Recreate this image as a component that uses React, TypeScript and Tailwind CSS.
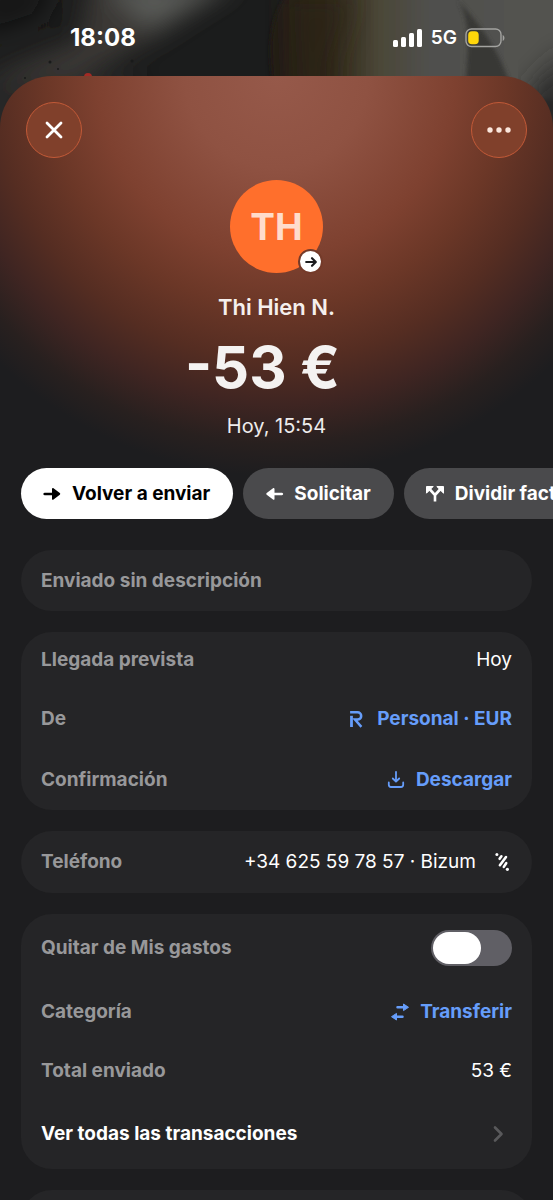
import type { ReactNode } from 'react';

const ArrowRight = () => (
  <svg viewBox="0 0 20 20" className="size-5 shrink-0" fill="currentColor" aria-hidden="true">
    <path d="M2.500 8.700h7.500V5c0-.9.9-1.200 1.500-.7l6.300 4.800c.6.500.6 1.200 0 1.700L11.500 15.600c-.6.500-1.500.2-1.500-.7v-3.700H2.500c-1.600 0-1.600-2.500 0-2.500Z" />
  </svg>
);

const ArrowLeft = () => (
  <svg viewBox="0 0 20 20" className="size-5 shrink-0" fill="currentColor" aria-hidden="true">
    <path d="M18 8.700h-7.500V5c0-.9-.9-1.200-1.500-.7L2.700 9.100c-.6.500-.6 1.200 0 1.700L9 15.600c.6.500 1.500.2 1.500-.7v-3.700H18c1.600 0 1.600-2.500 0-2.500Z" />
  </svg>
);

const SplitIcon = () => (
  <svg viewBox="0 0 20 20" className="size-5 shrink-0" aria-hidden="true">
    <path d="M4.500 5l5.500 6v6.500M15.500 5L10 11" fill="none" stroke="currentColor" strokeWidth="2.600" />
    <path d="M1.500 2.500h6.700L1.500 9.200zM18.500 2.500h-6.700l6.700 6.700z" fill="currentColor" stroke="currentColor" strokeWidth="1" strokeLinejoin="round" />
  </svg>
);

const BankIcon = () => (
  <svg viewBox="0 0 20 20" className="size-5 shrink-0" fill="none" aria-hidden="true">
    <path d="M4.500 6.800V18" stroke="currentColor" strokeWidth="2.800" />
    <path d="M3.100 3.200h7.400a3.700 3.700 0 0 1 0 7.400H8l6.400 7.200" stroke="currentColor" strokeWidth="2.500" />
  </svg>
);

const DownloadIcon = () => (
  <svg viewBox="0 0 20 20" className="size-5 shrink-0" fill="none" stroke="currentColor" strokeWidth="1.800" strokeLinecap="round" strokeLinejoin="round" aria-hidden="true">
    <path d="M10 1.800v9.700M6.800 8.500l3.200 3.200 3.200-3.200M2.800 12.500v2.300c0 1.500.8 2.200 2.200 2.200h10c1.400 0 2.200-.7 2.200-2.200v-2.300" />
  </svg>
);

const BizumIcon = () => (
  <svg viewBox="0 0 20 20" className="size-5 shrink-0" fill="none" stroke="currentColor" strokeLinecap="round" strokeWidth="2.600" aria-hidden="true">
    <path d="M9.400 4.300L7.600 6.800M14 5L7.900 13.200M14.200 11.200l-2.400 3.700" />
    <circle cx="4.900" cy="2.400" r="1.500" fill="currentColor" stroke="none" />
    <circle cx="15.400" cy="17.300" r="1.600" fill="currentColor" stroke="none" />
  </svg>
);

const TransferIcon = () => (
  <svg viewBox="0 0 20 20" className="size-5 shrink-0" aria-hidden="true">
    <path d="M7.500 5.300h7M12.500 14.700h-7" stroke="currentColor" strokeWidth="2.500" strokeLinecap="round" />
    <path d="M13.500 2l5 3.300-5 3.300zM6.500 11.400l-5 3.300 5 3.300z" fill="currentColor" stroke="currentColor" strokeWidth="1" strokeLinejoin="round" />
  </svg>
);

function StatusBar() {
  return (
    <header className="relative flex h-[76px] shrink-0 items-center justify-between pl-[70px] pr-12 text-white">
      <span className="text-[24px] font-bold leading-7">18:08</span>
      <div className="flex items-center gap-2">
        <svg viewBox="0 0 30 18" className="h-[18px] w-[30px]" fill="currentColor" role="img" aria-label="Cobertura">
          <rect x="0" y="11" width="5" height="7" rx="1.500" />
          <rect x="8" y="8" width="5" height="10" rx="1.500" />
          <rect x="16" y="4" width="5" height="14" rx="1.500" />
          <rect x="24" y="0" width="5" height="18" rx="1.500" />
        </svg>
        <span className="text-[19px] font-semibold leading-6">5G</span>
        <svg viewBox="0 0 40 20" className="h-5 w-10" role="img" aria-label="Batería">
          <rect x="1" y="1" width="35" height="17.500" rx="5.500" fill="none" stroke="#a3a3a0" strokeWidth="1.400" />
          <rect x="3.200" y="3.300" width="10.500" height="13" rx="3.800" fill="#ffd60a" />
          <path d="M37.700 7v6c2.300-1 2.300-5 0-6Z" fill="#a3a3a0" />
        </svg>
      </div>
    </header>
  );
}

// Dimmed, out-of-focus photo that shows above the sheet
function Backdrop() {
  return (
    <svg
      viewBox="0 0 553 140"
      preserveAspectRatio="none"
      className="absolute inset-x-0 top-0 h-[140px] w-full"
      aria-hidden="true"
    >
      <defs>
        <filter id="soft" x="-30%" y="-60%" width="160%" height="220%">
          <feGaussianBlur stdDeviation="13" />
        </filter>
        <filter id="edge" x="-30%" y="-30%" width="160%" height="160%">
          <feGaussianBlur stdDeviation="2" />
        </filter>
        <linearGradient id="petal" x1="0" x2="1">
          <stop offset="0" stopColor="#211b13" />
          <stop offset=".2" stopColor="#30291a" />
          <stop offset=".38" stopColor="#4b4738" />
          <stop offset=".55" stopColor="#50504d" />
          <stop offset="1" stopColor="#535351" />
        </linearGradient>
      </defs>
      <rect width="553" height="140" fill="#1b1c1c" />
      <g filter="url(#soft)">
        <path d="M-20 80L80 40 90-20H240L150 40 60 90-20 140Z" fill="#3a3936" />
        <path d="M100-20H235L150 28Z" fill="#5a5b59" />
        <path d="M-20-20H60L40 20-20 40Z" fill="#141515" />
        <path d="M-20 80H140V160H-20Z" fill="#262726" />
      </g>
      <path d="M286-5C266 25 268 60 276 100H560V-5Z" fill="url(#petal)" filter="url(#edge)" />
      <path d="M285-5H350C355 30 320 62 340 100H290Z" fill="#2b2417" opacity=".6" filter="url(#soft)" />
      <path d="M458 0C472 25 468 50 465 90H512C500 50 480 25 458 0Z" fill="#393836" filter="url(#edge)" />
      <path d="M530 90L570 50V140H530Z" fill="#2c2c2b" filter="url(#soft)" />
      <circle cx="88" cy="77" r="4" fill="#a32a25" />
      <g fill="#191a1a">
        <circle cx="50" cy="62" r="1.500" />
        <circle cx="132" cy="61" r="1.500" />
        <circle cx="58" cy="69" r="1" />
        <circle cx="25" cy="78" r="1" />
      </g>
    </svg>
  );
}

function RoundButton({ label, children }: { label: string; children: ReactNode }) {
  return (
    <button
      type="button"
      aria-label={label}
      className="flex size-14 items-center justify-center rounded-full border border-[#c25a38] bg-[#80402b]"
    >
      {children}
    </button>
  );
}

const PILL = 'flex h-[51px] shrink-0 items-center gap-[10px] rounded-full pl-[21px] pr-[23px] text-[19px] font-bold leading-6';

function Card({ children }: { children: ReactNode }) {
  return <section className="shrink-0 rounded-[31px] bg-[#252527] px-5">{children}</section>;
}

function Row({ label, height, children }: { label: string; height: string; children: ReactNode }) {
  return (
    <div className={`flex items-center justify-between ${height}`}>
      <span className="font-bold text-[#98989a]">{label}</span>
      {children}
    </div>
  );
}

function RowLink({ icon, children }: { icon: ReactNode; children: ReactNode }) {
  return (
    <a href="#" className="flex items-center gap-[10px] font-bold text-[#669dfa]">
      {icon}
      {children}
    </a>
  );
}

export default function App() {
  return (
    <div className="relative flex h-screen flex-col overflow-hidden bg-[#1b1c1c] font-[Inter,sans-serif]">
      <Backdrop />
      <StatusBar />

      <main className="relative flex min-h-0 flex-1 flex-col overflow-hidden rounded-t-[52px] bg-[#1d1d1f] bg-[radial-gradient(ellipse_72%_400px_at_50%_0,#96594a_0%,#8f5242_23%,#7e4130_45%,#6b3727_58%,#552d22_71%,#3f2522_82%,#28201f_92%,#1d1d1f_100%)] text-white">
        <div className="flex shrink-0 justify-between px-[26px] pt-[26px]">
          <RoundButton label="Cerrar">
            <svg viewBox="0 0 20 20" className="size-5" fill="none" stroke="currentColor" strokeWidth="2.800" strokeLinecap="round">
              <path d="M3 3l14 14M17 3L3 17" />
            </svg>
          </RoundButton>
          <RoundButton label="Más opciones">
            <svg viewBox="0 0 24 6" className="h-[6px] w-6" fill="#fbe6dc">
              <circle cx="3" cy="3" r="2.700" />
              <circle cx="12" cy="3" r="2.700" />
              <circle cx="21" cy="3" r="2.700" />
            </svg>
          </RoundButton>
        </div>

        <div className="mt-[22px] flex shrink-0 flex-col items-center">
          <div className="relative flex size-[93px] items-center justify-center rounded-full bg-[#ff6f2c]">
            <span className="text-[37px] font-bold leading-10 text-[#ffdccb]">TH</span>
            <span className="absolute -bottom-px right-0 flex size-[25px] items-center justify-center rounded-full border-2 border-[#743a29] bg-white">
              <svg viewBox="0 0 14 14" className="size-[14px]" fill="none" stroke="#1d1d1f" strokeWidth="2.200" strokeLinecap="round" strokeLinejoin="round" aria-hidden="true">
                <path d="M2.200 7h9.300M8 3.200L11.800 7 8 10.800" />
              </svg>
            </span>
          </div>
          <h1 className="mt-5 text-[22px] font-semibold leading-7 text-[#f5efed]">Thi Hien N.</h1>
          <p className="mt-3 pr-7 text-[58px] font-bold leading-[68px] text-[#f4f2f1]">-53 €</p>
          <p className="mt-[11px] text-[20px] leading-7 text-[#eeecec]">Hoy, 15:54</p>
        </div>

        <div className="mt-7 flex shrink-0 gap-[10px] overflow-x-auto pl-[21px] [scrollbar-width:none]">
          <button type="button" className={`${PILL} bg-white text-black`}>
            <ArrowRight />
            Volver a enviar
          </button>
          <button type="button" className={`${PILL} bg-[#4a4a4c]`}>
            <ArrowLeft />
            Solicitar
          </button>
          <button type="button" className={`${PILL} bg-[#4a4a4c]`}>
            <SplitIcon />
            Dividir factura
          </button>
        </div>

        <div className="mt-[31px] flex flex-col gap-[21px] px-[21px] text-[19px] leading-7">
          <Card>
            <div className="flex h-[61px] items-center font-bold text-[#98989a]">Enviado sin descripción</div>
          </Card>

          <Card>
            <Row label="Llegada prevista" height="h-14">
              <span>Hoy</span>
            </Row>
            <Row label="De" height="h-[61px]">
              <RowLink icon={<BankIcon />}>Personal · EUR</RowLink>
            </Row>
            <Row label="Confirmación" height="h-[61px]">
              <RowLink icon={<DownloadIcon />}>Descargar</RowLink>
            </Row>
          </Card>

          <Card>
            <Row label="Teléfono" height="h-[62px]">
              <span className="flex items-center gap-4">
                +34 625 59 78 57 · Bizum
                <BizumIcon />
              </span>
            </Row>
          </Card>

          <Card>
            <div className="flex h-[67px] items-center justify-between">
              <label htmlFor="exclude" className="font-bold text-[#98989a]">
                Quitar de Mis gastos
              </label>
              <input
                id="exclude"
                type="checkbox"
                role="switch"
                className="flex h-9 w-[81px] appearance-none items-center rounded-full bg-[#605f65] px-[2px] before:h-8 before:w-12 before:rounded-full before:bg-white checked:justify-end checked:bg-[#669dfa]"
              />
            </div>
            <Row label="Categoría" height="h-[62px]">
              <RowLink icon={<TransferIcon />}>Transferir</RowLink>
            </Row>
            <Row label="Total enviado" height="h-[55px]">
              <span>53 €</span>
            </Row>
            <a href="#" className="flex h-[71px] items-center justify-between font-bold">
              Ver todas las transacciones
              <svg viewBox="0 0 20 20" className="mr-1 size-5" fill="none" stroke="#59595b" strokeWidth="2.600" strokeLinecap="round" strokeLinejoin="round" aria-hidden="true">
                <path d="M7 3.500l6.500 6.500L7 16.500" />
              </svg>
            </a>
          </Card>

          <Card>
            <div className="h-[62px]" />
          </Card>
        </div>
      </main>
    </div>
  );
}
